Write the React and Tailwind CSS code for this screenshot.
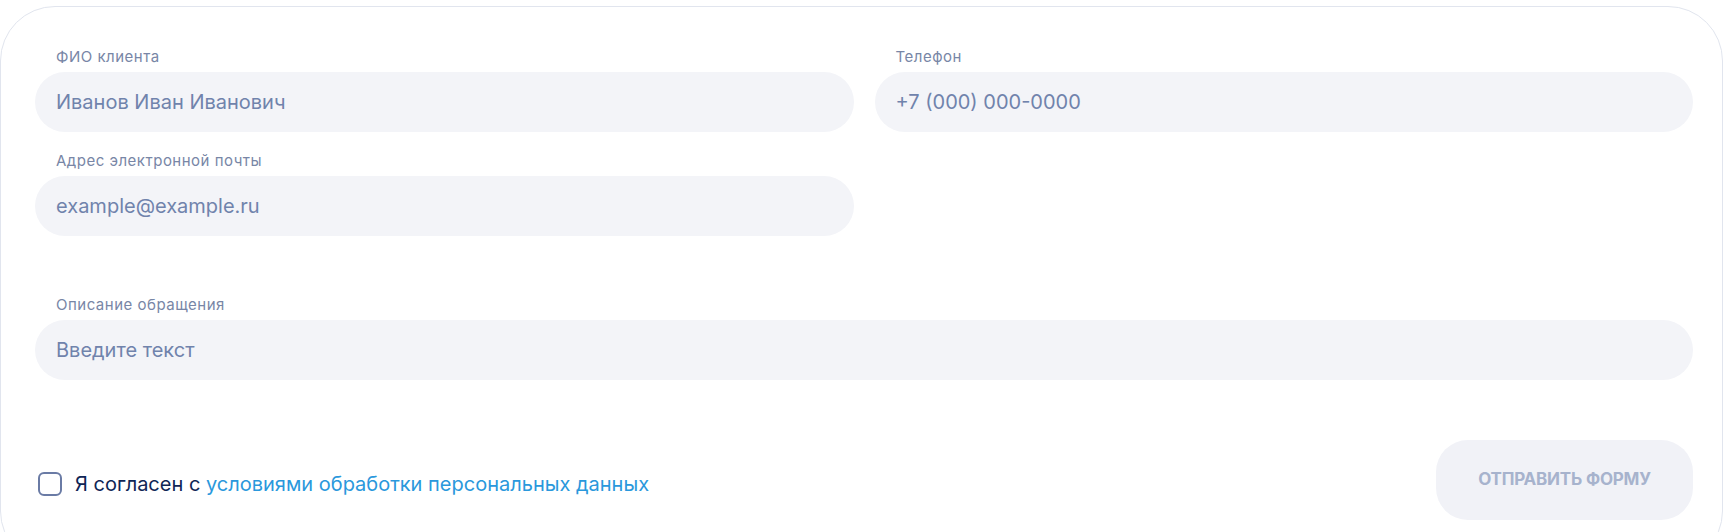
import React from 'react';

const Field = ({ label, placeholder, type = 'text' }) => (
  <label className="block">
    <span className="block pl-[21px] mb-[7px] text-[15px] leading-[17px] tracking-[0.5px] text-[#7886a6]">{label}</span>
    <input
      type={type}
      placeholder={placeholder}
      className="w-full h-[60px] rounded-full bg-[#f3f4f8] px-[21px] text-[20px] text-[#6f82ab] placeholder:text-[#7083ac] outline-none"
    />
  </label>
);

export default function App() {
  return (
    <div className="bg-white min-h-screen pt-[6px] overflow-hidden" style={{ fontFamily: 'Inter, "Noto Sans", sans-serif' }}>
      <form className="border border-[#e1e5ee] rounded-[55px] h-[560px] pt-[41px] pl-[34px] pr-[29px]">
        <div className="grid grid-cols-2 gap-x-[21px] gap-y-[20px]">
          <Field label="ФИО клиента" placeholder="Иванов Иван Иванович" />
          <Field label="Телефон" placeholder="+7 (000) 000-0000" type="tel" />
          <Field label="Адрес электронной почты" placeholder="example@example.ru" type="email" />
          <div />
        </div>

        <div className="mt-[60px]">
          <Field label="Описание обращения" placeholder="Введите текст" />
        </div>

        <div className="flex items-center justify-between mt-[60px]">
          <label className="flex items-center gap-[13px] pl-[3px] mt-[8px] cursor-pointer">
            <span className="w-[24px] h-[24px] rounded-[6px] border-2 border-[#6a7ba5] bg-white" />
            <span className="text-[20px] text-[#0f2656]">
              Я согласен с <a href="#" className="text-[#2a98dc]">условиями обработки персональных данных</a>
            </span>
          </label>
          <button type="submit" className="w-[257px] h-[80px] rounded-[32px] bg-[#f1f2f7] text-[#a7b3cd] font-bold text-[17px] uppercase tracking-[-0.2px]">
            Отправить форму
          </button>
        </div>
      </form>
    </div>
  );
}
